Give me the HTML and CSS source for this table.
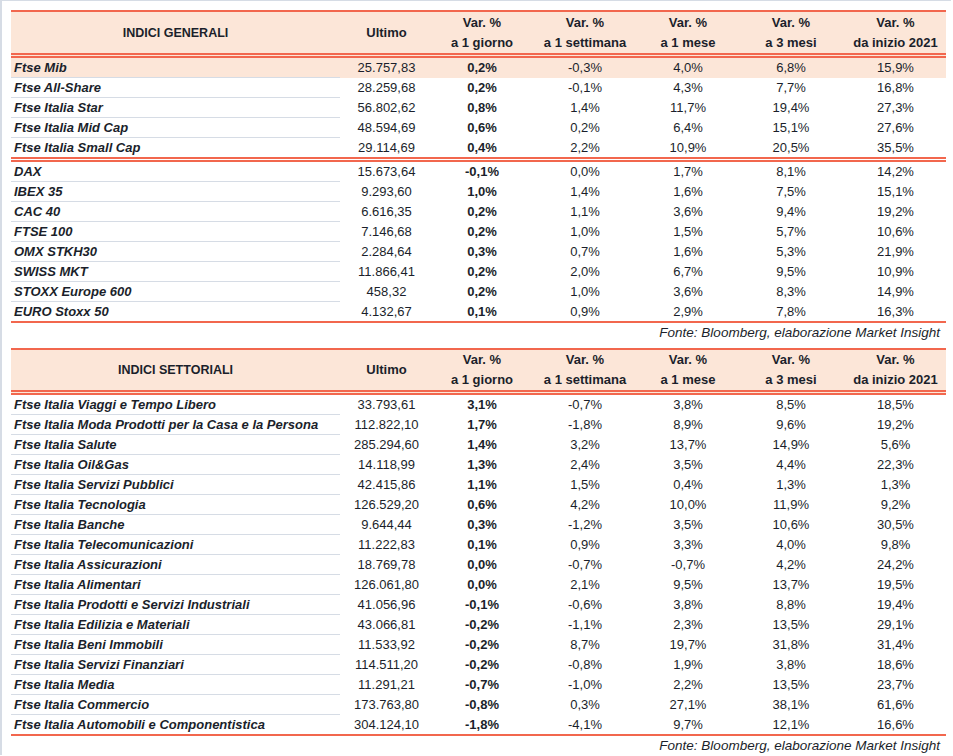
FILE: index.html
```html
<!DOCTYPE html>
<html lang="it">
<head>
<meta charset="utf-8">
<title>Indici</title>
<link rel="stylesheet" href="styles.css">
</head>
<body>
<div class="frame">
  <table class="tbl tbl-gen">
    <colgroup>
      <col class="c1"><col class="c2"><col class="c3"><col class="c4"><col class="c5"><col class="c6"><col class="c7">
    </colgroup>
    <thead>
      <tr>
        <th class="name-h">INDICI GENERALI</th>
        <th>Ultimo</th>
        <th>Var. %<br>a 1 giorno</th>
        <th>Var. %<br>a 1 settimana</th>
        <th>Var. %<br>a 1 mese</th>
        <th>Var. %<br>a 3 mesi</th>
        <th>Var. %<br>da inizio 2021</th>
      </tr>
    </thead>
    <tbody>
      <tr class="hl"><td class="n">Ftse Mib</td><td>25.757,83</td><td class="b">0,2%</td><td>-0,3%</td><td>4,0%</td><td>6,8%</td><td>15,9%</td></tr>
      <tr><td class="n">Ftse All-Share</td><td>28.259,68</td><td class="b">0,2%</td><td>-0,1%</td><td>4,3%</td><td>7,7%</td><td>16,8%</td></tr>
      <tr><td class="n">Ftse Italia Star</td><td>56.802,62</td><td class="b">0,8%</td><td>1,4%</td><td>11,7%</td><td>19,4%</td><td>27,3%</td></tr>
      <tr><td class="n">Ftse Italia Mid Cap</td><td>48.594,69</td><td class="b">0,6%</td><td>0,2%</td><td>6,4%</td><td>15,1%</td><td>27,6%</td></tr>
      <tr class="sep"><td class="n">Ftse Italia Small Cap</td><td>29.114,69</td><td class="b">0,4%</td><td>2,2%</td><td>10,9%</td><td>20,5%</td><td>35,5%</td></tr>
      <tr><td class="n">DAX</td><td>15.673,64</td><td class="b">-0,1%</td><td>0,0%</td><td>1,7%</td><td>8,1%</td><td>14,2%</td></tr>
      <tr><td class="n">IBEX 35</td><td>9.293,60</td><td class="b">1,0%</td><td>1,4%</td><td>1,6%</td><td>7,5%</td><td>15,1%</td></tr>
      <tr><td class="n">CAC 40</td><td>6.616,35</td><td class="b">0,2%</td><td>1,1%</td><td>3,6%</td><td>9,4%</td><td>19,2%</td></tr>
      <tr><td class="n">FTSE 100</td><td>7.146,68</td><td class="b">0,2%</td><td>1,0%</td><td>1,5%</td><td>5,7%</td><td>10,6%</td></tr>
      <tr><td class="n">OMX STKH30</td><td>2.284,64</td><td class="b">0,3%</td><td>0,7%</td><td>1,6%</td><td>5,3%</td><td>21,9%</td></tr>
      <tr><td class="n">SWISS MKT</td><td>11.866,41</td><td class="b">0,2%</td><td>2,0%</td><td>6,7%</td><td>9,5%</td><td>10,9%</td></tr>
      <tr><td class="n">STOXX Europe 600</td><td>458,32</td><td class="b">0,2%</td><td>1,0%</td><td>3,6%</td><td>8,3%</td><td>14,9%</td></tr>
      <tr class="last"><td class="n">EURO Stoxx 50</td><td>4.132,67</td><td class="b">0,1%</td><td>0,9%</td><td>2,9%</td><td>7,8%</td><td>16,3%</td></tr>
    </tbody>
  </table>
  <div class="fonte fonte-1">Fonte: Bloomberg, elaborazione Market Insight</div>

  <table class="tbl tbl-set">
    <colgroup>
      <col class="c1"><col class="c2"><col class="c3"><col class="c4"><col class="c5"><col class="c6"><col class="c7">
    </colgroup>
    <thead>
      <tr>
        <th class="name-h">INDICI SETTORIALI</th>
        <th>Ultimo</th>
        <th>Var. %<br>a 1 giorno</th>
        <th>Var. %<br>a 1 settimana</th>
        <th>Var. %<br>a 1 mese</th>
        <th>Var. %<br>a 3 mesi</th>
        <th>Var. %<br>da inizio 2021</th>
      </tr>
    </thead>
    <tbody>
      <tr><td class="n">Ftse Italia Viaggi e Tempo Libero</td><td>33.793,61</td><td class="b">3,1%</td><td>-0,7%</td><td>3,8%</td><td>8,5%</td><td>18,5%</td></tr>
      <tr><td class="n">Ftse Italia Moda Prodotti per la Casa e la Persona</td><td>112.822,10</td><td class="b">1,7%</td><td>-1,8%</td><td>8,9%</td><td>9,6%</td><td>19,2%</td></tr>
      <tr><td class="n">Ftse Italia Salute</td><td>285.294,60</td><td class="b">1,4%</td><td>3,2%</td><td>13,7%</td><td>14,9%</td><td>5,6%</td></tr>
      <tr><td class="n">Ftse Italia Oil&amp;Gas</td><td>14.118,99</td><td class="b">1,3%</td><td>2,4%</td><td>3,5%</td><td>4,4%</td><td>22,3%</td></tr>
      <tr><td class="n">Ftse Italia Servizi Pubblici</td><td>42.415,86</td><td class="b">1,1%</td><td>1,5%</td><td>0,4%</td><td>1,3%</td><td>1,3%</td></tr>
      <tr><td class="n">Ftse Italia Tecnologia</td><td>126.529,20</td><td class="b">0,6%</td><td>4,2%</td><td>10,0%</td><td>11,9%</td><td>9,2%</td></tr>
      <tr><td class="n">Ftse Italia Banche</td><td>9.644,44</td><td class="b">0,3%</td><td>-1,2%</td><td>3,5%</td><td>10,6%</td><td>30,5%</td></tr>
      <tr><td class="n">Ftse Italia Telecomunicazioni</td><td>11.222,83</td><td class="b">0,1%</td><td>0,9%</td><td>3,3%</td><td>4,0%</td><td>9,8%</td></tr>
      <tr><td class="n">Ftse Italia Assicurazioni</td><td>18.769,78</td><td class="b">0,0%</td><td>-0,7%</td><td>-0,7%</td><td>4,2%</td><td>24,2%</td></tr>
      <tr><td class="n">Ftse Italia Alimentari</td><td>126.061,80</td><td class="b">0,0%</td><td>2,1%</td><td>9,5%</td><td>13,7%</td><td>19,5%</td></tr>
      <tr><td class="n">Ftse Italia Prodotti e Servizi Industriali</td><td>41.056,96</td><td class="b">-0,1%</td><td>-0,6%</td><td>3,8%</td><td>8,8%</td><td>19,4%</td></tr>
      <tr><td class="n">Ftse Italia Edilizia e Materiali</td><td>43.066,81</td><td class="b">-0,2%</td><td>-1,1%</td><td>2,3%</td><td>13,5%</td><td>29,1%</td></tr>
      <tr><td class="n">Ftse Italia Beni Immobili</td><td>11.533,92</td><td class="b">-0,2%</td><td>8,7%</td><td>19,7%</td><td>31,8%</td><td>31,4%</td></tr>
      <tr><td class="n">Ftse Italia Servizi Finanziari</td><td>114.511,20</td><td class="b">-0,2%</td><td>-0,8%</td><td>1,9%</td><td>3,8%</td><td>18,6%</td></tr>
      <tr><td class="n">Ftse Italia Media</td><td>11.291,21</td><td class="b">-0,7%</td><td>-1,0%</td><td>2,2%</td><td>13,5%</td><td>23,7%</td></tr>
      <tr><td class="n">Ftse Italia Commercio</td><td>173.763,80</td><td class="b">-0,8%</td><td>0,3%</td><td>27,1%</td><td>38,1%</td><td>61,6%</td></tr>
      <tr class="last"><td class="n">Ftse Italia Automobili e Componentistica</td><td>304.124,10</td><td class="b">-1,8%</td><td>-4,1%</td><td>9,7%</td><td>12,1%</td><td>16,6%</td></tr>
    </tbody>
  </table>
  <div class="fonte">Fonte: Bloomberg, elaborazione Market Insight</div>
</div>
</body>
</html>
```

FILE: styles.css
```css
html, body {
  margin: 0;
  padding: 0;
  background: #ffffff;
}

body {
  font-family: "Liberation Sans", Arial, sans-serif;
  font-size: 13px;
  color: #1b1f2b;
}

.frame {
  width: 951px;
  height: 755px;
  border-left: 2px solid #d6dce5;
  border-top: 1px solid #d6dce5;
  padding: 9px 0 0 9px;
  box-sizing: border-box;
  overflow: hidden;
}

.tbl {
  width: 935px;
  table-layout: fixed;
  border-collapse: separate;
  border-spacing: 0;
}

.c1 { width: 329px; }
.c2 { width: 93px; }
.c3 { width: 98px; }
.c4 { width: 108px; }
.c5 { width: 98px; }
.c6 { width: 108px; }
.c7 { width: 101px; }

.tbl th {
  background: #fce6d8;
  border-top: 2px solid #f2674e;
  border-bottom: 5px double #f2674e;
  padding: 0;
  height: 41px;
  line-height: 20px;
  font-weight: bold;
  font-size: 13px;
  text-align: center;
  vertical-align: middle;
  color: #1b1f2b;
}

.tbl-set th {
  height: 39px;
}

.tbl th.name-h {
  font-size: 12.5px;
}

.tbl td {
  padding: 0;
  line-height: 19px;
  height: 19px;
  text-align: center;
  white-space: nowrap;
  border-bottom: 1px solid transparent;
}

.tbl td.n {
  text-align: left;
  padding-left: 3px;
  font-weight: bold;
  font-style: italic;
  border-bottom-color: #d6dce5;
}

.tbl-set td.n {
  border-bottom-color: #d6dce5;
}

.tbl td.b {
  font-weight: bold;
}

.tbl tr.hl td {
  background: #fce6d8;
}

.tbl tr.sep td {
  line-height: 19px;
  height: 19px;
  border-bottom: 5px double #f2674e;
}

.tbl tr.last td {
  border-bottom: 2px solid #f2674e;
}

.tbl-set tr.last td {
  line-height: 19px;
  height: 19px;
}

.fonte {
  text-align: right;
  font-style: italic;
  font-size: 13.5px;
  line-height: 20px;
  padding-right: 6px;
  width: 935px;
  box-sizing: border-box;
  color: #1b1f2b;
}

.fonte-1 {
  margin-bottom: 5px;
}
```
